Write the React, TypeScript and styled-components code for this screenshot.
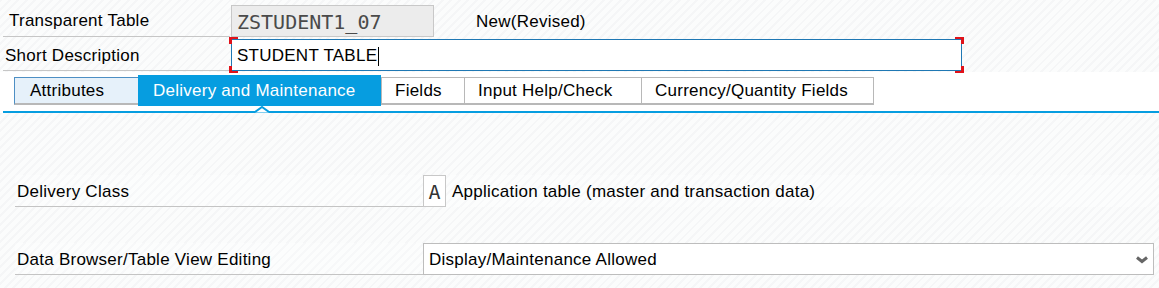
import React from "react";
import styled, { createGlobalStyle } from "styled-components";

const Global = createGlobalStyle`
  html, body { margin: 0; padding: 0; background: #ffffff; }
  body { width: 1159px; height: 288px; overflow: hidden; font-family: "Liberation Sans", Arial, sans-serif; font-size: 17px; letter-spacing: 0.25px; color: #000; }
`;

const hatch = `repeating-linear-gradient(135deg, #f5f6f7 0px, #f5f6f7 2px, #fbfcfc 2px, #fbfcfc 6px)`;
const hatchLight = `repeating-linear-gradient(135deg, #f7f8f9 0px, #f7f8f9 2px, #fcfdfd 2px, #fcfdfd 6px)`;

const Page = styled.div`
  width: 1159px;
  height: 288px;
  display: flex;
  flex-direction: column;
`;

const Header = styled.div`
  height: 72px;
  background: ${hatch};
  display: flex;
  flex-direction: column;
`;

const HeadRow = styled.div<{ $h: number }>`
  height: ${(p) => p.$h}px;
  display: flex;
  align-items: flex-start;
`;

const HeadLabel = styled.div<{ $pad: number; $h: number; $top: number }>`
  margin-left: 3px;
  width: 227px;
  height: ${(p) => p.$h}px;
  box-sizing: border-box;
  border-bottom: 1px solid #c6c6c6;
  padding-left: ${(p) => p.$pad}px;
  padding-top: ${(p) => p.$top}px;
  display: flex;
  align-items: center;
`;

const KeyBox = styled.div`
  margin-top: 5px;
  margin-left: 1px;
  width: 203px;
  height: 32px;
  box-sizing: border-box;
  background: #ececec;
  border: 1px solid #c8c8c8;
  padding-left: 5px;
  font-family: "DejaVu Sans Mono", "Liberation Mono", monospace;
  font-size: 20px;
  letter-spacing: 0;
  color: #4a4a4a;
  display: flex;
  align-items: center;
  padding-top: 1px;
`;

const Status = styled.div`
  margin-left: 42px;
  height: 37px;
  display: flex;
  align-items: center;
  padding-top: 6px;
  box-sizing: border-box;
`;

const FocusWrap = styled.div`
  position: relative;
  margin-left: -1px;
  padding: 2px;
  width: 735px;
  height: 36px;
  box-sizing: border-box;
`;

const Corner = styled.span<{ $v: "top" | "bottom"; $h: "left" | "right" }>`
  position: absolute;
  width: 9px;
  height: 7px;
  box-sizing: border-box;
  ${(p) => p.$v}: 0;
  ${(p) => p.$h}: 0;
  border-${(p) => p.$v}: 2px solid #e0121a;
  border-${(p) => p.$h}: 3px solid #e0121a;
`;

const TextInput = styled.div`
  height: 32px;
  box-sizing: border-box;
  border: 1px solid #1f78b4;
  background: #ffffff;
  padding-left: 5px;
  display: flex;
  align-items: center;
  padding-top: 2px;
`;

const Caret = styled.span`
  display: inline-block;
  width: 1px;
  height: 19px;
  background: #000;
  margin-left: 1px;
`;

const TabStrip = styled.div`
  height: 41px;
  background: #ffffff;
  display: flex;
  flex-direction: column;
`;

const TabRow = styled.div`
  height: 34px;
  padding-left: 14px;
  display: flex;
  align-items: flex-end;
`;

const Tab = styled.div<{ $w: number; $active?: boolean; $first?: boolean; $pad: number }>`
  width: ${(p) => p.$w}px;
  box-sizing: border-box;
  padding-left: ${(p) => p.$pad}px;
  display: flex;
  align-items: center;
  white-space: nowrap;
  ${(p) =>
    p.$active
      ? `
    height: 31px;
    background: #069de0;
    color: #ffffff;
    padding-top: 1px;
  `
      : `
    height: 28px;
    margin-bottom: 1px;
    background: ${p.$first ? "#e6f1fa" : "#ffffff"};
    border-top: 1px solid ${p.$first ? "#4d8fc4" : "#b8b8b8"};
    border-left: 1px solid ${p.$first ? "#4d8fc4" : "#b8b8b8"};
    border-right: 1px solid #b8b8b8;
    border-bottom: 2px solid #b8b8b8;
    margin-right: -1px;
    padding-top: 1px;
  `}
`;

const TabLine = styled.div`
  position: relative;
  margin-top: 5px;
  margin-left: 3px;
  height: 2px;
  background: #069de0;
`;

const Notch = styled.svg`
  position: absolute;
  left: 252px;
  top: -5px;
`;

const Content = styled.div`
  flex: 1;
  background: ${hatch};
  padding-left: 15px;
  padding-top: 62px;
  display: flex;
  flex-direction: column;
  gap: 36px;
`;

const FieldRow = styled.div`
  display: flex;
  align-items: stretch;
  height: 32px;
  background: ${hatchLight};
`;

const FieldLabel = styled.div`
  width: 408px;
  box-sizing: border-box;
  border-bottom: 1px solid #c4c4c4;
  padding-left: 2px;
  display: flex;
  align-items: center;
  padding-top: 3px;
`;

const CodeBox = styled.div`
  width: 23px;
  height: 32px;
  box-sizing: border-box;
  background: #ffffff;
  border: 1px solid #c8c8c8;
  font-family: "DejaVu Sans Mono", "Liberation Mono", monospace;
  font-size: 20px;
  letter-spacing: 0;
  color: #333333;
  display: flex;
  align-items: center;
  justify-content: center;
  padding-top: 1px;
`;

const CodeText = styled.div`
  margin-left: 6px;
  display: flex;
  align-items: center;
  padding-top: 2px;
`;

const Select = styled.div`
  width: 731px;
  height: 32px;
  box-sizing: border-box;
  background: #ffffff;
  border: 1px solid #bdbdbd;
  padding-left: 5px;
  padding-right: 5px;
  display: flex;
  align-items: center;
  justify-content: space-between;
  padding-top: 2px;
`;

const tabs = [
  { label: "Attributes", w: 125, pad: 15, first: true },
  { label: "Delivery and Maintenance", w: 243, pad: 15, active: true },
  { label: "Fields", w: 84, pad: 13 },
  { label: "Input Help/Check", w: 178, pad: 13 },
  { label: "Currency/Quantity Fields", w: 233, pad: 13 },
];

export default function App() {
  return (
    <Page>
      <Global />
      <Header>
        <HeadRow $h={37}>
          <HeadLabel $pad={6} $h={37} $top={5}>Transparent Table</HeadLabel>
          <KeyBox>ZSTUDENT1_07</KeyBox>
          <Status>New(Revised)</Status>
        </HeadRow>
        <HeadRow $h={35}>
          <HeadLabel $pad={2} $h={34} $top={4}>Short Description</HeadLabel>
          <FocusWrap>
            <Corner $v="top" $h="left" />
            <Corner $v="bottom" $h="left" />
            <Corner $v="top" $h="right" />
            <Corner $v="bottom" $h="right" />
            <TextInput>
              STUDENT TABLE
              <Caret />
            </TextInput>
          </FocusWrap>
        </HeadRow>
      </Header>
      <TabStrip>
        <TabRow>
          {tabs.map((t) => (
            <Tab key={t.label} $w={t.w} $pad={t.pad} $active={t.active} $first={t.first}>
              {t.label}
            </Tab>
          ))}
        </TabRow>
        <TabLine>
          <Notch width="14" height="7" viewBox="0 0 14 7">
            <path d="M0 6.5 L7 0.8 L14 6.5 Z" fill="#ffffff" />
            <path d="M0 6 L7 1 L14 6" fill="none" stroke="#069de0" strokeWidth="2" />
          </Notch>
        </TabLine>
      </TabStrip>
      <Content>
        <FieldRow>
          <FieldLabel>Delivery Class</FieldLabel>
          <CodeBox>A</CodeBox>
          <CodeText>Application table (master and transaction data)</CodeText>
        </FieldRow>
        <FieldRow>
          <FieldLabel>Data Browser/Table View Editing</FieldLabel>
          <Select>
            <span>Display/Maintenance Allowed</span>
            <svg width="12" height="8" viewBox="0 0 12 8">
              <path d="M1 1.5 L6 5.5 L11 1.5" fill="none" stroke="#666666" strokeWidth="3" />
            </svg>
          </Select>
        </FieldRow>
      </Content>
    </Page>
  );
}
